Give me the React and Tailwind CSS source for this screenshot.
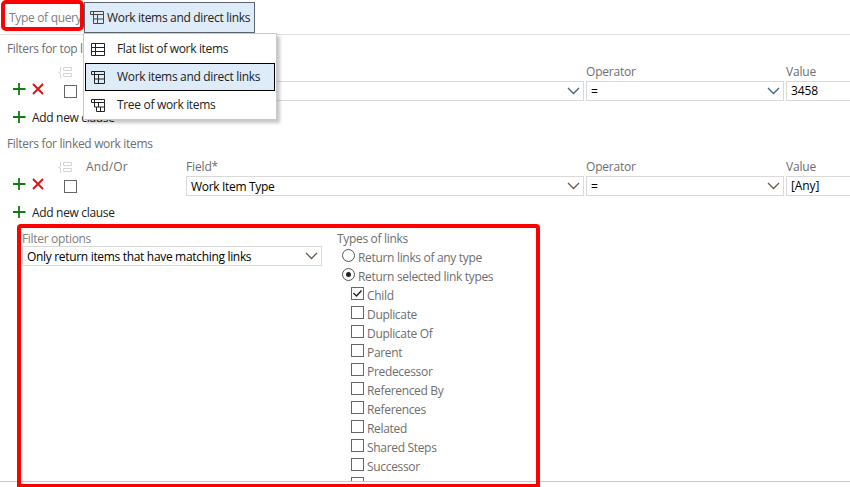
import React from "react";

const Chevron = ({ color = "#555b60" }) => (
  <svg className="mr-[3px] shrink-0" width="13" height="8" viewBox="0 0 13 8" fill="none">
    <path d="M1 1l5.5 5.5L12 1" stroke={color} strokeWidth="1.3" />
  </svg>
);

const Plus = () => (
  <svg className="shrink-0" width="13" height="13" viewBox="0 0 13 13">
    <path d="M0 6h12.5M6 0v12" stroke="#107c10" strokeWidth="1.8" />
  </svg>
);

const Cross = () => (
  <svg className="shrink-0" width="12" height="12" viewBox="0 0 12 12">
    <path d="M1 1l10 10M11 1L1 11" stroke="#da1212" strokeWidth="1.9" />
  </svg>
);

const GroupIcon = () => (
  <svg width="15" height="11" viewBox="0 0 15 11" fill="none" stroke="#d6d6d6">
    <path d="M3.5 0.5H2.5v4l-2 1 2 1v4h1M5.5 0.5h8v3h-8zM5.5 6.5h8v3h-8z" />
  </svg>
);

const QueryIcon = ({ kind, stroke = "#222" }) => (
  <svg className="shrink-0" width="15" height="14" viewBox="0 0 15 14" fill="none" stroke={stroke}>
    {kind === "flat" && <path d="M0.5 0.5h13v12h-13zM0.5 4.5h13M0.5 8.5h13M4.5 0.5v12" />}
    {kind === "direct" && (
      <path d="M0.5 0.5h13v3h-13zM3.5 0.5v12h10v-9M3.5 8h10M7.5 3.5v9" />
    )}
    {kind === "tree" && (
      <path d="M0.5 0.5h13v3h-13zM3.5 0.5v7.500h10v-4.500M7.5 3.500v4.500M5.5 8v4.500h8v-4.500M9.5 8v4.500" />
    )}
  </svg>
);

const Checkbox = ({ checked }) => (
  <span className="flex h-[13px] w-[13px] shrink-0 items-center justify-center border border-[#666] bg-white">
    {checked && (
      <svg width="11" height="11" viewBox="0 0 11 11" fill="none">
        <path d="M1.500 5l3 3 5-5.500" stroke="#222" strokeWidth="1.4" />
      </svg>
    )}
  </span>
);

const Radio = ({ checked }) => (
  <span className="flex h-[13px] w-[13px] shrink-0 items-center justify-center rounded-full border border-[#555] bg-white">
    {checked && <span className="h-[5px] w-[5px] rounded-full bg-[#222]" />}
  </span>
);

const Select = ({ children, className, chevron }) => (
  <div className={`flex h-5 shrink-0 items-center justify-between border border-[#d9d9d9] bg-white pl-1 text-black ${className}`}>
    <span className="pt-px">{children}</span>
    <Chevron color={chevron} />
  </div>
);

const Clauses = ({ title, field, value, chevron }) => (
  <section className="h-[95px]">
    <h2 className="flex h-7 items-center pl-[7px]">{title}</h2>
    <div className="flex h-[18px] items-center">
      <div className="w-[86px] shrink-0 pl-[58px]"><GroupIcon /></div>
      <div className="w-[100px] shrink-0 tracking-[0.15px]">And/Or</div>
      <div className="w-[400px] shrink-0 tracking-[-0.15px]">Field*</div>
      <div className="w-[200px] shrink-0 tracking-[-0.2px]">Operator</div>
      <div className="shrink-0 tracking-[-0.2px]">Value</div>
    </div>
    <div className="flex h-5">
      <div className="flex w-[186px] shrink-0 pl-[13px]">
        <span className="pt-0.5"><Plus /></span>
        <span className="ml-1.5 pt-0.5"><Cross /></span>
        <span className="ml-5 pt-1"><Checkbox /></span>
      </div>
      <Select className="w-[398px]" chevron={chevron}>{field}</Select>
      <Select className="ml-0.5 w-[198px]" chevron={chevron}>=</Select>
      <div className="ml-0.5 flex w-[70px] shrink-0 items-center border border-[#d9d9d9] pl-1 tracking-[-0.1px] text-black">{value}</div>
    </div>
    <div className="flex h-[29px] items-center pl-[13px] pt-1 text-[#222]">
      <Plus />
      <span className="ml-1.5">Add new clause</span>
    </div>
  </section>
);

const linkTypes = ["Child", "Duplicate", "Duplicate Of", "Parent", "Predecessor", "Referenced By", "References", "Related", "Shared Steps", "Successor"];

const menu = [
  { kind: "flat", label: "Flat list of work items" },
  { kind: "direct", label: "Work items and direct links" },
  { kind: "tree", label: "Tree of work items" },
];

export default function App() {
  return (
    <div className="relative h-[487px] w-[850px] overflow-hidden bg-white font-['Open_Sans','Noto_Sans',sans-serif] text-[12px] leading-[16px] tracking-[-0.32px] text-[#6e6e6e]">
      <header className="flex h-[35px] border-b border-[#e1e1e1] pt-0.5">
        <div className="w-[84px] shrink-0 whitespace-nowrap pl-[9px] pt-2 text-[#808080]">Type of query</div>
        <div className="relative w-[171px]">
          <button className="flex h-[31px] w-[171px] items-center border border-[#5c6670] bg-[#deebf8] pl-[5px] text-[#222]">
            <QueryIcon kind="direct" stroke="#4a453c" />
            <span className="ml-[2px] whitespace-nowrap">Work items and direct links</span>
          </button>
          <div className="absolute -left-px top-[31px] z-10 h-[87px] w-[194px] border border-[#c8c8c8] bg-white px-px pt-px text-[#222] shadow-[3px_3px_3px_rgba(0,0,0,0.22)]">
            {menu.map((item) => (
              <div
                key={item.kind}
                className={`flex h-7 items-center border pl-[5px] ${item.kind === "direct" ? "border-black bg-[#deebf8]" : "border-transparent"}`}
              >
                <span className="pt-px"><QueryIcon kind={item.kind} /></span>
                <span className="ml-[11px] whitespace-nowrap">{item.label}</span>
              </div>
            ))}
          </div>
        </div>
      </header>

      <Clauses title="Filters for top level work items" field="" value="3458" chevron="#41637f" />
      <Clauses title="Filters for linked work items" field="Work Item Type" value="[Any]" chevron="#6b5a48" />

      <div className="flex h-[257px] overflow-hidden border-b border-[#c8c8c8] pl-[22px] pt-[6px]">
        <div className="w-[315px] shrink-0">
          <div className="h-[15px] text-[#808080]">Filter options</div>
          <Select className="w-[300px]" chevron="#6b5a48">Only return items that have matching links</Select>
        </div>
        <div className="shrink-0">
          <div className="h-[17px]">Types of links</div>
          {["Return links of any type", "Return selected link types"].map((label, i) => (
            <div key={label} className="flex h-[19px] pl-[5px]">
              <span className="pt-px"><Radio checked={i === 1} /></span>
              <span className="ml-[3px] pt-0.5">{label}</span>
            </div>
          ))}
          {linkTypes.map((label, i) => (
            <div key={label} className="flex h-[19px] pl-[14px]">
              <span className="pt-px"><Checkbox checked={i === 0} /></span>
              <span className="ml-[3px] pt-0.5">{label}</span>
            </div>
          ))}
          <div className="pl-[14px] pt-px"><Checkbox /></div>
        </div>
      </div>

      <div className="absolute left-px top-0 z-20 h-[31px] w-[83px] rounded-[5px] border-4 border-[#f00]" />
      <div className="absolute left-[17px] top-[224px] z-20 h-[263px] w-[523px] rounded-t-[4px] border-4 border-b-[3px] border-[#f00]" />
    </div>
  );
}
